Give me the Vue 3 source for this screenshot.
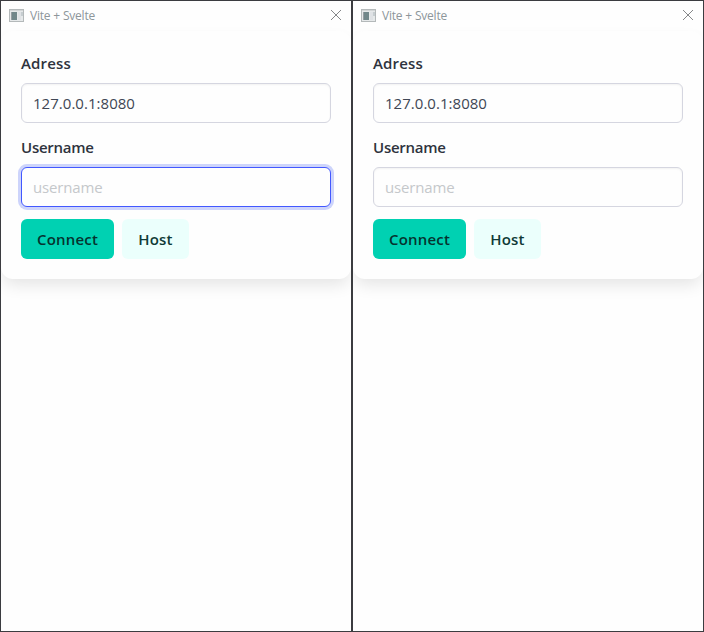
<script setup>
import { ref } from 'vue'

const windows = ref([
  { id: 1, address: '127.0.0.1:8080', username: '', active: true },
  { id: 2, address: '127.0.0.1:8080', username: '', active: false },
])
</script>

<template>
  <main class="desktop">
    <section v-for="win in windows" :key="win.id" class="window">
      <header class="titlebar">
        <svg class="app-icon" width="15" height="13" viewBox="0 0 15 13" shape-rendering="crispEdges">
          <rect width="15" height="13" fill="#b4b9ba" />
          <rect x="1" y="2" width="13" height="10" fill="#e6e9ea" />
          <rect x="1" y="1" width="13" height="1" fill="#d2d5d6" />
          <rect x="2" y="3" width="6" height="8" fill="#71878a" />
          <rect x="2" y="3" width="1" height="8" fill="#969da1" />
          <rect x="9" y="3" width="3" height="8" fill="#dfe2e5" />
          <rect x="12" y="3" width="2" height="4" fill="#c6cdd0" />
        </svg>
        <span class="title">Vite + Svelte</span>
        <svg class="close" width="12" height="12" viewBox="0 0 12 12">
          <path d="M1 1L11 11M11 1L1 11" fill="none" stroke="#858789" stroke-width="1" />
        </svg>
      </header>
      <form class="box" @submit.prevent>
        <div class="field">
          <label class="label label-address">Adress</label>
          <input v-model="win.address" class="input" type="text" />
        </div>
        <div class="field">
          <label class="label label-user">Username</label>
          <input v-model="win.username" class="input" :class="{ focused: win.active }" type="text" placeholder="username" />
        </div>
        <div class="buttons">
          <button class="button connect">Connect</button>
          <button class="button host">Host</button>
        </div>
      </form>
    </section>
  </main>
</template>

<style>
body {
  margin: 0;
  background: #fefefe;
}
</style>

<style scoped>
* {
  box-sizing: border-box;
}
.desktop {
  display: grid;
  grid-template-columns: 1fr 1fr;
  width: 704px;
  height: 632px;
  font-family: "Open Sans", "Noto Sans", sans-serif;
}
.window {
  border: 1px solid #3b3c40;
  background: #fefefe;
  overflow: hidden;
}
.titlebar {
  display: flex;
  align-items: center;
  height: 30px;
  padding: 0 9px 2px 8px;
}
.app-icon {
  flex: none;
}
.title {
  padding-top: 1px;
  margin-left: 6px;
  font-size: 12px;
  line-height: 16px;
  letter-spacing: -0.2px;
  color: #8d969b;
}
.close {
  margin-left: auto;
}
.box {
  height: 248px;
  padding: 20px;
  border-radius: 12px;
  background: #fefefe;
  box-shadow: 0 8px 16px -2px rgba(10, 10, 10, 0.1);
}
.field {
  margin-bottom: 12px;
}
.label {
  display: block;
  width: max-content;
  height: 24px;
  margin-bottom: 8px;
  font-size: 15px;
  font-weight: 600;
  line-height: 24px;
  color: #2e333d;
}
.label-address {
  letter-spacing: 0.15px;
}
.label-user {
  letter-spacing: -0.25px;
}
.input {
  display: block;
  width: 100%;
  height: 40px;
  padding: 0 11px;
  border: 1px solid #d5d6e0;
  border-radius: 6px;
  outline: none;
  background: #fefefe;
  box-shadow: inset 0 1px 2px rgba(10, 10, 10, 0.05);
  font-family: inherit;
  font-size: 15px;
  letter-spacing: 0.03px;
  color: #404654;
}
.input::placeholder {
  color: #c5c8cb;
  opacity: 1;
  letter-spacing: -0.15px;
}
.input.focused {
  border-color: #4258ff;
  box-shadow: 0 0 0 3px #cdd4fb;
}
.buttons {
  display: flex;
  gap: 8px;
}
.button {
  height: 40px;
  padding: 0;
  border: 0;
  border-radius: 6px;
  font-family: inherit;
  font-size: 15px;
  font-weight: 600;
  letter-spacing: 0.2px;
}
.connect {
  width: 93px;
  background: #00d1b2;
  color: #06332f;
}
.host {
  width: 67px;
  background: #ebfffc;
  color: #0f3a37;
}
</style>
